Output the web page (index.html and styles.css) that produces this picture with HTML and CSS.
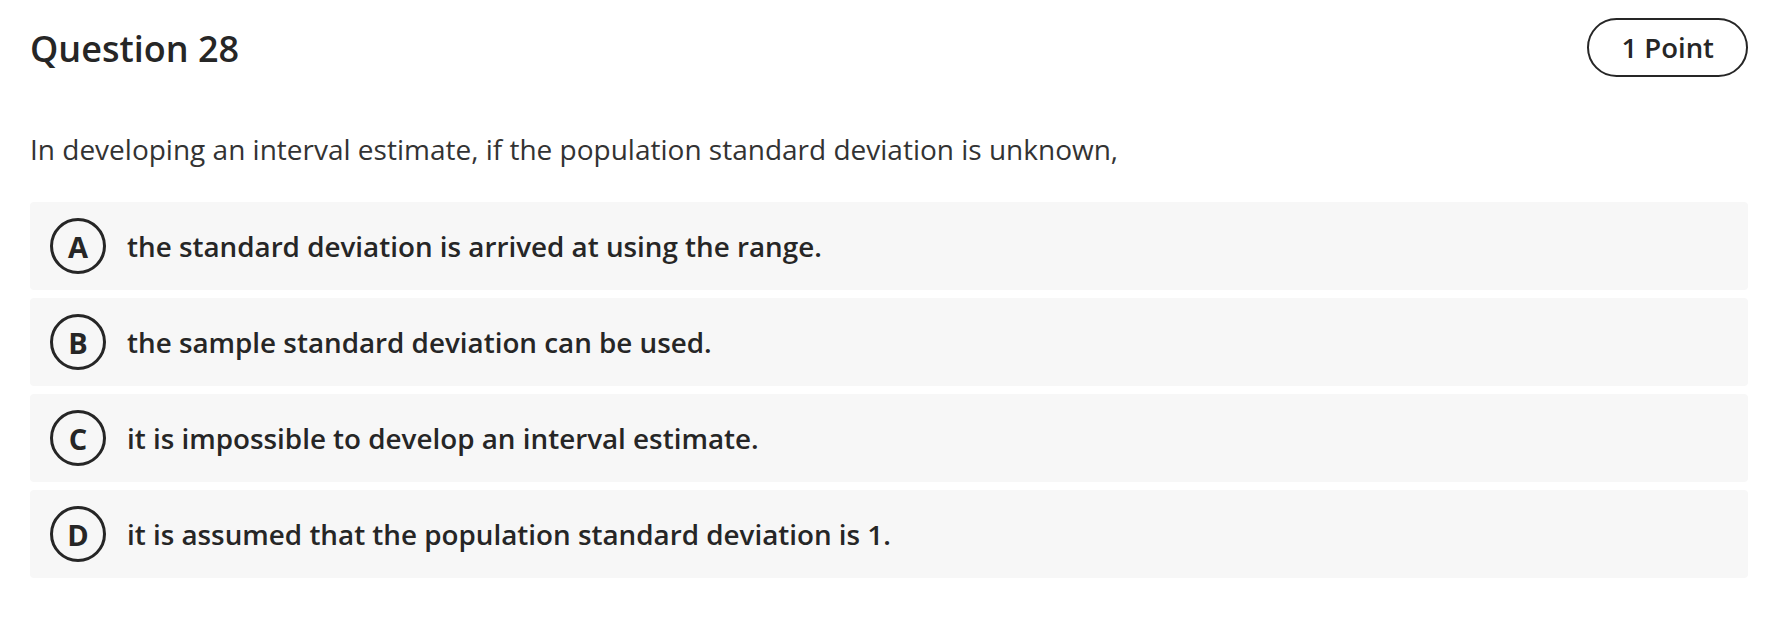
FILE: index.html
```html
<!DOCTYPE html>
<html>
<head>
<meta charset="utf-8">
<link rel="stylesheet" href="styles.css">
</head>
<body>
<div class="question">
  <div class="header">
    <h2 class="title">Question 28</h2>
    <div class="points">1 Point</div>
  </div>
  <p class="prompt">In developing an interval estimate, if the population standard deviation is unknown,</p>
  <div class="options">
    <div class="option"><span class="letter">A</span><span class="text">the standard deviation is arrived at using the range.</span></div>
    <div class="option"><span class="letter">B</span><span class="text">the sample standard deviation can be used.</span></div>
    <div class="option"><span class="letter">C</span><span class="text">it is impossible to develop an interval estimate.</span></div>
    <div class="option"><span class="letter">D</span><span class="text">it is assumed that the population standard deviation is 1.</span></div>
  </div>
</div>
</body>
</html>
```
FILE: styles.css
```css
html, body {
  margin: 0;
  padding: 0;
  background: #ffffff;
}
body {
  font-family: "Open Sans", "Liberation Sans", sans-serif;
  color: #262626;
}
.question {
  padding: 18px 26px 0 30px;
}
.header {
  display: flex;
  justify-content: space-between;
  align-items: flex-start;
}
.title {
  margin: 9px 0 0 0;
  font-size: 36px;
  font-weight: 600;
  line-height: 44px;
  color: #262626;
}
.points {
  box-sizing: border-box;
  height: 59px;
  padding: 0 32px;
  border: 2.5px solid #262626;
  border-radius: 30px;
  font-size: 27.5px;
  font-weight: 600;
  display: flex;
  align-items: center;
}
.prompt {
  margin: 52px 0 0 0;
  font-size: 28px;
  line-height: 40px;
  color: #333;
}
.options {
  margin-top: 33px;
  display: flex;
  flex-direction: column;
  gap: 8px;
}
.option {
  height: 88px;
  background: #f7f7f7;
  border-radius: 4px;
  display: flex;
  align-items: center;
  padding-left: 20px;
  gap: 21px;
}
.letter {
  box-sizing: border-box;
  width: 56px;
  height: 56px;
  border: 3px solid #262626;
  border-radius: 50%;
  display: flex;
  align-items: center;
  justify-content: center;
  font-size: 29px;
  font-weight: 700;
  flex-shrink: 0;
}
.text {
  font-size: 27.8px;
  font-weight: 600;
}
```
